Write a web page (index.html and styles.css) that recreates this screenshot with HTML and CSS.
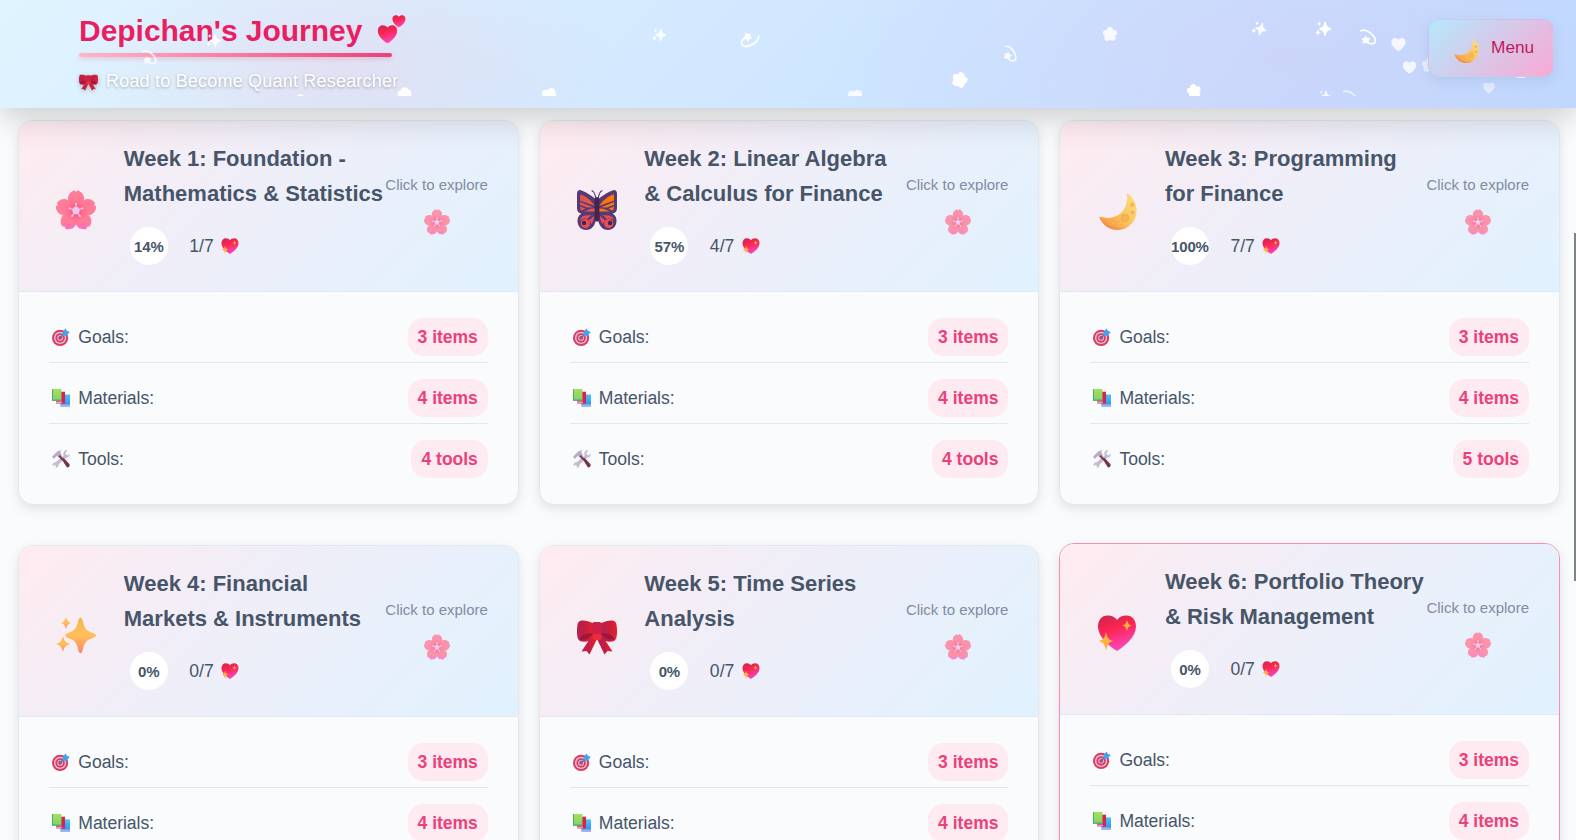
FILE: index.html
```html
<!DOCTYPE html>
<html lang="en">
<head>
<meta charset="utf-8">
<title>Depichan's Journey</title>
<link rel="stylesheet" href="styles.css">
</head>
<body>
<svg class="sprite" width="0" height="0" aria-hidden="true">
  <defs>
    <linearGradient id="gPetal" x1="0" y1="0" x2="0" y2="40" gradientUnits="userSpaceOnUse"><stop offset="0" stop-color="#ff7f9b"/><stop offset="1" stop-color="#ff6f90"/></linearGradient>
    <linearGradient id="gPetalLow" x1="0" y1="24" x2="0" y2="40" gradientUnits="userSpaceOnUse"><stop offset="0" stop-color="#f860c0" stop-opacity="0"/><stop offset=".5" stop-color="#f860c0" stop-opacity="0"/><stop offset="1" stop-color="#f26ade"/></linearGradient>
    <radialGradient id="gCore"><stop offset="0" stop-color="#ff3f5f"/><stop offset="1" stop-color="#ff6a8c" stop-opacity="0"/></radialGradient>
    <linearGradient id="gMoon" x1="1" y1="0" x2="0" y2="1"><stop offset="0" stop-color="#fbe08a"/><stop offset=".5" stop-color="#fcc45c"/><stop offset="1" stop-color="#f58a3c"/></linearGradient>
    <linearGradient id="gStar" x1="0" y1="0" x2="0" y2="1"><stop offset="0" stop-color="#f2b64a"/><stop offset=".5" stop-color="#ffc05c"/><stop offset="1" stop-color="#ff8268"/></linearGradient>
    <linearGradient id="gHeart" x1="0" y1="0" x2=".35" y2="1"><stop offset="0" stop-color="#c9284f"/><stop offset=".45" stop-color="#fb2450"/><stop offset="1" stop-color="#fb45b8"/></linearGradient>
    <linearGradient id="gBow" x1="0" y1="0" x2="1" y2="0"><stop offset="0" stop-color="#b3224f"/><stop offset=".5" stop-color="#c41e3f"/><stop offset="1" stop-color="#e8202c"/></linearGradient>
    <linearGradient id="gWing" x1="0" y1="0" x2="1" y2="0"><stop offset="0" stop-color="#e0524f"/><stop offset="1" stop-color="#ee5a40"/></linearGradient>
    <linearGradient id="gGreen" x1="0" y1="0" x2="0" y2="1"><stop offset="0" stop-color="#a5e05a"/><stop offset="1" stop-color="#7fd36a"/></linearGradient>
    <linearGradient id="gBlue" x1="0" y1="0" x2="0" y2="1"><stop offset="0" stop-color="#4cc6f4"/><stop offset="1" stop-color="#2f8df0"/></linearGradient>
  </defs>
  <symbol id="blossom" viewBox="0 0 40 40">
    <g fill="url(#gPetal)">
      <path id="petal" d="M20 21C14 17 11.500 12 12 7.500 12.500 4 15 1.500 18 .3L20 1.800 22 .3C25 1.500 27.500 4 28 7.500 28.500 12 26 17 20 21Z"/>
      <use href="#petal" transform="rotate(72 20 21)"/><use href="#petal" transform="rotate(144 20 21)"/><use href="#petal" transform="rotate(216 20 21)"/><use href="#petal" transform="rotate(288 20 21)"/>
    </g>
    <g fill="url(#gPetalLow)"><path d="M20 24 33 30C34 34 31 38 27.500 39L26 37.500 23.500 38.800C21 36 20 32 20 29 20 32 19 36 16.500 38.800L14 37.500 12.500 39C9 38 6 34 7 30Z"/></g>
    <circle cx="20" cy="20.500" r="12" fill="url(#gCore)"/>
    <g stroke="#edc6f5" stroke-width="1.300" fill="#edc6f5"><path d="M20 20.500V14M20 20.500 26.200 18.500M20 20.500 23.800 25.800M20 20.500 16.200 25.800M20 20.500 13.800 18.500" stroke-linecap="round"/><circle cx="20" cy="20.500" r="3"/><g stroke="none"><circle cx="20" cy="13.800" r="1.100"/><circle cx="26.400" cy="18.400" r="1.100"/><circle cx="24" cy="26" r="1.100"/><circle cx="16" cy="26" r="1.100"/><circle cx="13.600" cy="18.400" r="1.100"/></g></g>
  </symbol>
  <symbol id="butterfly" viewBox="0 0 40 40">
    <path d="M20 10C14 5 7 1 3 0 1 0 0 1.500 0 4V18C0 21.500 2 23 4.500 23.500 1.500 25 .5 28 .5 31 .5 36 4 40 9 40 14 40 17 37 18.500 31.500H21.500C23 37 26 40 31 40 36 40 39.500 36 39.500 31 39.500 28 38.500 25 35.500 23.500 38 23 40 21.500 40 18V4C40 1.500 39 0 37 0 33 1 26 5 20 10Z" fill="#563a78"/>
    <g fill="url(#gWing)"><path d="M3 4.500C7 5 13 9 18 16L3 10.500Z"/><path d="M3 12 16 17.200 10 17.500 3 14.800Z"/><path d="M3 16.500 8.500 18.800 4.500 20.500C3.500 20 3 18.500 3 16.500Z"/><path d="M7 21.500 14 18.800 18 18.500V21.500Z"/></g>
    <g fill="#ff7606"><path d="M37 4.500C33 5 27 9 22 16L37 10.500Z"/><path d="M37 12 24 17.200 30 17.500 37 14.800Z"/><path d="M37 16.500 31.500 18.800 35.500 20.500C36.500 20 37 18.500 37 16.500Z"/><path d="M33 21.500 26 18.800 22 18.500V21.500Z"/></g>
    <g fill="#ec4d50"><path d="M8.500 25.500 14.500 25 10 29C7 28 5 28.800 3.200 30.500 3.200 27.500 5.500 25.800 8.500 25.500Z"/><path d="M17 26 12 30.500 14.500 34C16.500 31 17 28.500 17 26Z"/><path d="M31.500 25.500 25.500 25 30 29C33 28 35 28.800 36.800 30.500 36.800 27.500 34.500 25.800 31.500 25.500Z"/><path d="M23 26 28 30.500 25.500 34C23.500 31 23 28.500 23 26Z"/><circle cx="8.300" cy="33.500" r="4.600"/><circle cx="31.700" cy="33.500" r="4.600"/></g>
    <g fill="#412550"><circle cx="7" cy="33" r="2.200"/><circle cx="33" cy="33" r="2.200"/><rect x="17.600" y="7" width="4.800" height="24" rx="2.400"/></g>
    <path d="M18.800 8C18 4 17 1.500 15 .8M21.200 8C22 4 23 1.500 25 .8" fill="none" stroke="#563a78" stroke-width="1.200" stroke-linecap="round"/>
  </symbol>
  <symbol id="moon" viewBox="0 0 40 40">
    <path d="M30.500 3.500C36.500 7.500 40 14 39.500 21.500 39 32 31 39.800 20.500 40 12 40 5.500 35 2.500 27.500 2.300 26.800 2.800 26.500 3.500 26.800 12 29.500 21 27.500 26.500 20 30 15 30.400 9.500 29.800 4 29.800 3.500 30.100 3.300 30.500 3.500Z" fill="url(#gMoon)"/>
    <path d="M2.500 27.500C5.500 35 12 40 20.500 40 24 40 27 39 30 37.500 20 39 11 36.500 2.500 27.500Z" fill="#e98a55" opacity=".5"/>
    <g fill="#f7b556" stroke="#e6a24d" stroke-width=".7"><circle cx="28" cy="28" r="3.700"/><circle cx="16.500" cy="33.300" r="2"/><circle cx="35.300" cy="14.800" r="1.500"/><circle cx="35.500" cy="22.500" r="1.300"/></g>
  </symbol>
  <symbol id="sparkles" viewBox="0 0 40 40">
    <path d="M24.500 2.500C25.500 2.500 26 3.500 26.500 5 28.500 13.500 30 15.800 37.500 18.200 39 18.800 40 19.500 40 20.500S39 22.200 37.500 22.700C30 25.200 28.500 27 26.500 35.500 26 37.300 25.500 38.200 24.500 38.200S23 37.300 22.500 35.500C20.500 27 19 25.200 11.500 22.700 10 22.200 9.500 21.500 9.500 20.500S10 18.800 11.500 18.200C19 15.800 20.500 13.500 22.500 5 23 3.500 23.500 2.500 24.500 2.500Z"/>
    <path d="M10 2C11 5.500 11.700 6.600 15 8 11.700 9.400 11 10.500 10 14 9 10.500 8.300 9.400 5 8 8.300 6.600 9 5.500 10 2Z"/>
    <path d="M7 21C8.300 26 9.300 27.200 14 29 9.300 30.800 8.300 32 7 37 5.700 32 4.700 30.800 .2 29 4.700 27.200 5.700 26 7 21Z"/>
  </symbol>
  <symbol id="heart" viewBox="0 0 40 40"><path d="M20 38C12 33 1 24 1 13.500 1 7 5 2.500 10.500 2.500 15 2.500 18.500 4.500 20 7 21.500 4.500 25 2.500 29.500 2.500 35 2.500 39 7 39 13.500 39 24 28 33 20 38Z"/></symbol>
  <symbol id="sparkheart" viewBox="0 0 40 40">
    <use href="#heart" width="40" height="40" fill="url(#gHeart)"/>
    <path d="M9 19C10.300 25 11.500 26.800 16.500 28 11.500 29.500 10.300 31.500 9 37.800 7.700 31.500 6.500 29.500 1.500 28 6.500 26.800 7.700 25 9 19Z" fill="#ffb13d"/>
    <path d="M30 7C31 10.500 31.500 11.300 34.500 12.500 31.500 13.700 31 14.500 30 18 29 14.500 28.500 13.700 25.500 12.500 28.500 11.300 29 10.500 30 7Z" fill="#ffad3a"/>
  </symbol>
  <symbol id="bow" viewBox="0 0 40 40">
    <g fill="url(#gBow)"><path d="M14 22 4.500 36.500 9.500 36 12.500 39.500 20 24Z"/><path d="M26 22 35.500 36.500 30.500 36 27.500 39.500 20 24Z"/>
    <path d="M17 8.500C11 6 6 5 3 6 .5 7 0 11 0 16 0 21 .5 24.500 3 26 7 27.500 13 26.500 17 23.500Z"/><path d="M23 8.500C29 6 34 5 37 6 39.500 7 40 11 40 16 40 21 39.500 24.500 37 26 33 27.500 27 26.500 23 23.500Z"/></g>
    <path d="M2.500 24.500C4 20 10 17.500 16 19 13 23 8 25.500 2.500 24.500ZM37.500 24.500C36 20 30 17.500 24 19 27 23 32 25.500 37.500 24.500Z" fill="#8c1538" opacity=".75"/>
    <rect x="15.500" y="7" width="9" height="18" rx="2" fill="#cb2048"/><rect x="15.500" y="19" width="9" height="6" rx="2" fill="#ec2b3d"/>
  </symbol>
  <symbol id="hearts" viewBox="0 0 40 40">
    <use href="#heart" x="0" y="12.500" width="29" height="28" fill="url(#gHeart)"/>
    <use href="#heart" x="20.500" y="-1" width="19.500" height="19" fill="url(#gHeart)"/>
  </symbol>
  <symbol id="target" viewBox="0 0 40 40">
    <circle cx="18" cy="22" r="18" fill="#dd3c62"/><circle cx="18" cy="22" r="13.500" fill="#dcc6dc"/><circle cx="18" cy="22" r="10.500" fill="#dd3c62"/><circle cx="18" cy="22" r="6.500" fill="#d9b5cf"/><circle cx="18" cy="22" r="4" fill="#d9365e"/>
    <path d="M18 22 28 12" stroke="#3277ad" stroke-width="2.500"/><path d="M24 9 30 1 33 6 39.500 9 32 17 23 17Z" fill="#3fa3ee"/>
  </symbol>
  <symbol id="books" viewBox="0 0 40 40">
    <path d="M19 12H40V39H19Z" fill="url(#gBlue)"/><path d="M19 34.500H40V39H19Z" fill="#a8b0ea"/>
    <path d="M9 6H29V32H9Z" fill="#d8224f"/><path d="M9 28H22V31H9Z" fill="#eda2c4"/>
    <path d="M0 0H21V26H0Z" fill="url(#gGreen)"/><path d="M0 0H2V26H0Z" fill="#4aa565"/><path d="M1 23.500H21V26H1Z" fill="#4d9f86"/>
  </symbol>
  <symbol id="tools" viewBox="0 0 40 40">
    <path d="M29 1C25 4 24.500 8 26 12L8 27C3 27 0 31 2 36L6 33 9.500 36 7 39.500C12 40 15.500 36 14.500 32L31 17C36 18 40 14 39 8L34.500 12 30 9.500 30.500 5 34 1C32 0 31 0 29 1Z" fill="#c4bbd2"/>
    <path d="M0 15 12 3 21 0 18 5 22 11 15 17 11 13 4 20Z" fill="#b7acc6"/>
    <path d="M14 14 18 11 25 19 21 22Z" fill="#8a3a4c"/><path d="M21 20 26 17.500 38.500 31C41 35 37 40 33 38.500Z" fill="#733549"/>
  </symbol>
  <symbol id="dizzy" viewBox="0 0 40 40">
    <path d="M2 4C15-2 35 14 37 27 38 37 27 38 19 33" fill="none" stroke="#fff" stroke-width="4" stroke-linecap="round"/>
    <path d="M12 16 17 21 25 22 21 28 22 35 14 34 6 36 7 29 4 23 11 22Z"/>
  </symbol>
  <symbol id="flower" viewBox="0 0 40 40"><circle cx="20" cy="8.500" r="8.500"/><circle cx="31.500" cy="17" r="8.500"/><circle cx="27.500" cy="30.500" r="8.500"/><circle cx="12.500" cy="30.500" r="8.500"/><circle cx="8.500" cy="17" r="8.500"/><circle cx="20" cy="20" r="11"/></symbol>
  <symbol id="cloud" viewBox="0 0 40 40"><circle cx="9" cy="18" r="9"/><circle cx="21" cy="12" r="11"/><circle cx="31" cy="17" r="9"/><rect x="0" y="13" width="40" height="20" rx="9"/></symbol>
  <symbol id="cloudlet" viewBox="0 0 40 40"><circle cx="11" cy="13" r="11"/><circle cx="28" cy="12" r="12"/><rect y="11" width="40" height="24" rx="6"/></symbol>
</svg>

<header class="topbar">
  <svg class="confetti" width="1576" height="96" fill="#fff" aria-hidden="true">
    <use href="#sparkles" x="206" y="33" width="15" height="15"/>
    <use href="#dizzy" x="142" y="50" width="15" height="15" opacity=".85"/>
    <use href="#cloud" x="397.500" y="87" width="14" height="14" opacity=".95"/>
    <use href="#cloud" x="293" y="94" width="14" height="14"/>
    <use href="#cloudlet" x="542" y="88.500" width="14" height="14" transform="rotate(-12 549 95)"/>
    <use href="#sparkles" x="652" y="27.500" width="14.500" height="14.500" opacity=".85"/>
    <use href="#dizzy" x="741" y="32" width="17" height="17" transform="rotate(112 749.500 40.500)"/>
    <use href="#cloudlet" x="848" y="90" width="14" height="14" opacity=".85"/>
    <use href="#flower" x="952" y="72" width="15.500" height="15.500" transform="rotate(20 960 80)"/>
    <use href="#dizzy" x="1003" y="46.500" width="15" height="15" transform="rotate(18 1010 54)" opacity=".9"/>
    <use href="#flower" x="1103" y="27" width="14" height="14" opacity=".85"/>
    <use href="#sparkles" x="1252" y="21" width="15" height="15" transform="rotate(-345 1259 28)" opacity=".9"/>
    <use href="#sparkles" x="1315" y="20.500" width="16.500" height="16.500"/>
    <use href="#dizzy" x="1360" y="29" width="16.500" height="16.500"/>
    <use href="#heart" x="1391" y="37" width="15" height="15" opacity=".8"/>
    <use href="#heart" x="1402.500" y="60.500" width="14" height="14" opacity=".8"/>
    <use href="#flower" x="1422" y="58" width="14" height="14" opacity=".6"/>
    <use href="#flower" x="1187" y="84" width="14" height="14" transform="rotate(-10 1194 91)"/>
    <use href="#sparkles" x="1318" y="89.500" width="13" height="13" opacity=".85"/>
    <use href="#dizzy" x="1343" y="90" width="15" height="15" opacity=".75"/>
    <use href="#heart" x="1483" y="82" width="12" height="12" opacity=".5"/>
    <use href="#cloud" x="1515" y="69" width="12" height="11"/>
  </svg>
  <div class="brand">
    <div class="brand-line"><h1 class="brand-title">Depichan's Journey</h1><svg class="brand-hearts"><use href="#hearts"/></svg></div>
    <div class="brand-rule"></div>
    <div class="tagline"><svg class="tagline-bow"><use href="#bow"/></svg><span class="tagline-text">Road to Become Quant Researcher</span></div>
  </div>
  <button class="menu" type="button"><svg class="menu-moon"><use href="#moon"/></svg><span>Menu</span></button>
</header>

<main class="weeks">
  <article class="card">
    <div class="card-head"><svg class="card-icon"><use href="#blossom"/></svg>
      <div class="card-info"><h2 class="card-title">Week 1: Foundation -<br>Mathematics &amp; Statistics</h2><div class="progress"><span class="ring">14%</span><span class="count">1/7</span><svg class="count-heart"><use href="#sparkheart"/></svg></div></div>
      <div class="explore"><span>Click to explore</span><svg class="explore-icon"><use href="#blossom"/></svg></div></div>
    <div class="card-body">
      <div class="row"><svg class="row-icon"><use href="#target"/></svg><span class="label">Goals:</span><b class="pill">3 items</b></div>
      <div class="row"><svg class="row-icon"><use href="#books"/></svg><span class="label">Materials:</span><b class="pill">4 items</b></div>
      <div class="row"><svg class="row-icon"><use href="#tools"/></svg><span class="label">Tools:</span><b class="pill">4 tools</b></div>
    </div>
  </article>
  <article class="card">
    <div class="card-head"><svg class="card-icon"><use href="#butterfly"/></svg>
      <div class="card-info"><h2 class="card-title">Week 2: Linear Algebra<br>&amp; Calculus for Finance</h2><div class="progress"><span class="ring">57%</span><span class="count">4/7</span><svg class="count-heart"><use href="#sparkheart"/></svg></div></div>
      <div class="explore"><span>Click to explore</span><svg class="explore-icon"><use href="#blossom"/></svg></div></div>
    <div class="card-body">
      <div class="row"><svg class="row-icon"><use href="#target"/></svg><span class="label">Goals:</span><b class="pill">3 items</b></div>
      <div class="row"><svg class="row-icon"><use href="#books"/></svg><span class="label">Materials:</span><b class="pill">4 items</b></div>
      <div class="row"><svg class="row-icon"><use href="#tools"/></svg><span class="label">Tools:</span><b class="pill">4 tools</b></div>
    </div>
  </article>
  <article class="card">
    <div class="card-head"><svg class="card-icon"><use href="#moon"/></svg>
      <div class="card-info"><h2 class="card-title">Week 3: Programming<br>for Finance</h2><div class="progress"><span class="ring">100%</span><span class="count">7/7</span><svg class="count-heart"><use href="#sparkheart"/></svg></div></div>
      <div class="explore"><span>Click to explore</span><svg class="explore-icon"><use href="#blossom"/></svg></div></div>
    <div class="card-body">
      <div class="row"><svg class="row-icon"><use href="#target"/></svg><span class="label">Goals:</span><b class="pill">3 items</b></div>
      <div class="row"><svg class="row-icon"><use href="#books"/></svg><span class="label">Materials:</span><b class="pill">4 items</b></div>
      <div class="row"><svg class="row-icon"><use href="#tools"/></svg><span class="label">Tools:</span><b class="pill">5 tools</b></div>
    </div>
  </article>
  <article class="card">
    <div class="card-head"><svg class="card-icon" fill="url(#gStar)"><use href="#sparkles"/></svg>
      <div class="card-info"><h2 class="card-title">Week 4: Financial<br>Markets &amp; Instruments</h2><div class="progress"><span class="ring">0%</span><span class="count">0/7</span><svg class="count-heart"><use href="#sparkheart"/></svg></div></div>
      <div class="explore"><span>Click to explore</span><svg class="explore-icon"><use href="#blossom"/></svg></div></div>
    <div class="card-body">
      <div class="row"><svg class="row-icon"><use href="#target"/></svg><span class="label">Goals:</span><b class="pill">3 items</b></div>
      <div class="row"><svg class="row-icon"><use href="#books"/></svg><span class="label">Materials:</span><b class="pill">4 items</b></div>
    </div>
  </article>
  <article class="card">
    <div class="card-head"><svg class="card-icon"><use href="#bow"/></svg>
      <div class="card-info"><h2 class="card-title">Week 5: Time Series<br>Analysis</h2><div class="progress"><span class="ring">0%</span><span class="count">0/7</span><svg class="count-heart"><use href="#sparkheart"/></svg></div></div>
      <div class="explore"><span>Click to explore</span><svg class="explore-icon"><use href="#blossom"/></svg></div></div>
    <div class="card-body">
      <div class="row"><svg class="row-icon"><use href="#target"/></svg><span class="label">Goals:</span><b class="pill">3 items</b></div>
      <div class="row"><svg class="row-icon"><use href="#books"/></svg><span class="label">Materials:</span><b class="pill">4 items</b></div>
    </div>
  </article>
  <article class="card card-active">
    <div class="card-head"><svg class="card-icon"><use href="#sparkheart"/></svg>
      <div class="card-info"><h2 class="card-title">Week 6: Portfolio Theory<br>&amp; Risk Management</h2><div class="progress"><span class="ring">0%</span><span class="count">0/7</span><svg class="count-heart"><use href="#sparkheart"/></svg></div></div>
      <div class="explore"><span>Click to explore</span><svg class="explore-icon"><use href="#blossom"/></svg></div></div>
    <div class="card-body">
      <div class="row"><svg class="row-icon"><use href="#target"/></svg><span class="label">Goals:</span><b class="pill">3 items</b></div>
      <div class="row"><svg class="row-icon"><use href="#books"/></svg><span class="label">Materials:</span><b class="pill">4 items</b></div>
    </div>
  </article>
</main>
<div class="scroll-thumb"></div>
</body>
</html>
```

FILE: styles.css
```css
* { box-sizing: border-box; }

body {
  display: flex;
  flex-direction: column;
  margin: 0;
  height: 840px;
  overflow: hidden;
  background: #fafbfc;
  color: #475569;
  font-family: "Liberation Sans", Arial, sans-serif;
  font-size: 17.6px;
}

svg { display: block; flex: none; }
.sprite { position: absolute; }

/* Header */
.topbar {
  position: relative;
  z-index: 2;
  display: flex;
  flex: none;
  justify-content: space-between;
  height: 108px;
  padding: 0 22px 0 79px;
  background:
    radial-gradient(ellipse 270px 130px at 345px 70px, rgba(255, 182, 203, .24), transparent),
    radial-gradient(ellipse 460px 220px at 1290px 60px, rgba(221, 190, 240, .3), transparent),
    linear-gradient(135deg, #e0f4ff 0%, #d0e7ff 50%, #bcdaff 100%);
  box-shadow: 0 8px 32px rgba(0, 0, 0, .2);
}

.confetti { position: absolute; left: 0; top: 0; z-index: 1; pointer-events: none; }

.brand { padding-top: 12px; }
.brand-line { display: flex; align-items: flex-start; height: 41px; }
.brand-title {
  margin: 0;
  width: 298px;
  line-height: 38px;
  font-size: 30px;
  letter-spacing: -.03px;
  font-weight: 700;
  white-space: nowrap;
  color: #e91e63;
}
.brand-hearts { width: 29px; height: 29px; margin-top: 3px; }
.brand-rule {
  width: 313px;
  height: 4px;
  border-radius: 2px;
  background: linear-gradient(90deg, #ffb6c8, #ec407a);
  box-shadow: 0 2px 4px rgba(233, 30, 99, .2);
}
.tagline { display: flex; align-items: center; height: 24px; margin-top: 12px; }
.tagline-bow { width: 19px; height: 19px; margin-right: 8px; filter: drop-shadow(0 1px 2px rgba(0, 0, 0, .25)); }
.tagline-text {
  color: #fff;
  font-size: 18px;
  letter-spacing: .2px;
  white-space: nowrap;
  text-shadow: 0 1px 3px rgba(0, 0, 0, .3);
}

.menu {
  position: relative;
  z-index: 2;
  display: flex;
  width: 126px;
  height: 58px;
  margin-top: 19px;
  padding: 0 0 0 24px;
  border: 1px solid rgba(190, 200, 230, .45);
  border-radius: 12px;
  background: linear-gradient(135deg, #b5e8fd, #f9a8d4);
  box-shadow: 0 4px 12px rgba(100, 120, 170, .16);
  color: #c2185b;
  font: 17.3px/55px "Liberation Sans", Arial, sans-serif;
}
.menu-moon { width: 26px; height: 26px; margin: 17px 12px 0 0; }

/* Week cards */
.weeks {
  display: grid;
  flex: 1;
  min-height: 0;
  overflow: hidden;
  grid-template-columns: repeat(3, 1fr);
  grid-auto-rows: 384.500px;
  gap: 40.500px 20px;
  padding: 12px 16px 0 18.300px;
}
.card {
  overflow: hidden;
  border: 1px solid #e2e8f0;
  border-radius: 15px;
  background: #fafbfc;
  box-shadow: 0 4px 12px rgba(0, 0, 0, .1);
}
.card-active { border-color: #f48fb1; transform: translateY(-2px); }

.card-head {
  display: flex;
  height: 171px;
  padding: 20px 30px 0 37px;
  border-bottom: 1px solid #e2e8f0;
  background: linear-gradient(135deg, #ffebf0 0%, #f0eef8 40%, #e0f2fe 100%);
}
.card-icon { width: 40px; height: 40px; margin: 49px 27.500px 0 0; }
.card-info { flex: 1; min-width: 0; }
.card-title {
  margin: 0;
  font-size: 22px;
  line-height: 35px;
  white-space: nowrap;
  color: #475569;
}
.progress { display: flex; align-items: center; height: 38px; margin: 16px 0 0 6px; }
.ring {
  display: flex;
  align-items: center;
  justify-content: center;
  width: 38px;
  height: 38px;
  margin-right: 21.500px;
  padding-top: 1px;
  border-radius: 50%;
  background: #fff;
  font-size: 15px;
  letter-spacing: -.15px;
  font-weight: 700;
}
.count { width: 32px; }
.count-heart { width: 18px; height: 18px; }
.explore {
  display: flex;
  flex-direction: column;
  align-items: center;
  padding-top: 35px;
  font-size: 15px;
  line-height: 18px;
  color: #7f8da3;
  white-space: nowrap;
}
.explore-icon { width: 26px; height: 26px; margin: 15px 0 0 1px; opacity: .8; }

.card-body { display: grid; gap: 16px; align-content: start; padding: 26px 30px 0; }
.row {
  display: flex;
  align-items: flex-start;
  height: 45px;
  border-bottom: 1px solid #e0e7ef;
  line-height: 38px;
}
.row:nth-child(3) { border-bottom: 0; }
.row-icon { width: 18px; height: 18px; margin: 10px 8px 0 3px; }
.label { flex: 1; letter-spacing: -.06px; }
.pill {
  height: 38px;
  padding: 0 10px;
  border-radius: 15px;
  background: #feebf1;
  color: #ec407a;
  font-size: 17.5px;
}

/* Page scroll indicator */
.scroll-thumb { position: fixed; z-index: 3; right: 0; top: 233px; width: 2px; height: 348px; background: #7f8583; }
```
